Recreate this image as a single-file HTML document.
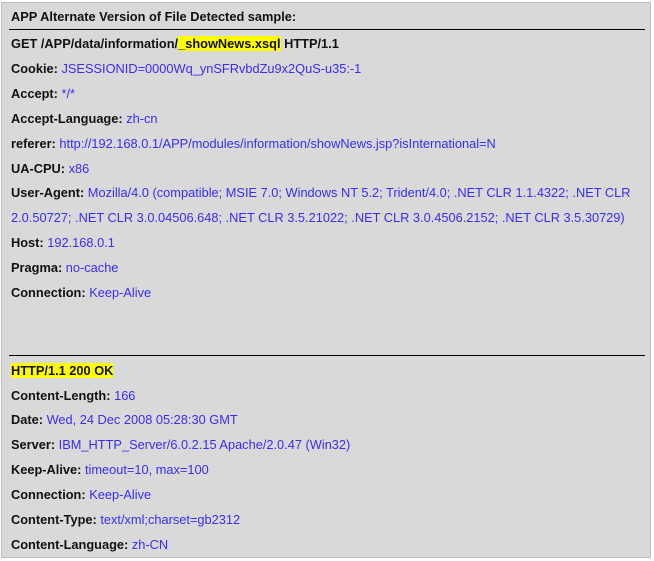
<html><head><style>
body{margin:0;background:#fff;width:654px;height:561px;position:relative;font-family:"Liberation Sans",Arial,sans-serif;font-size:12.8px;}
.box{position:absolute;left:1px;top:2px;width:648px;height:554px;background:#d9d9d9;border:1px solid #bdbdbd;}
.l{position:absolute;left:11px;white-space:nowrap;line-height:17px;}
b{color:#111;}
.v{color:#3a2cf0;}
.hr{position:absolute;left:9px;width:636px;height:1px;background:#000;}
.hl{background:#ffff00;}
</style></head><body>
<div class="box"></div>
<div class="l" style="top:8px"><b>APP Alternate Version of File Detected sample:</b></div>
<div class="hr" style="top:29px"></div>
<div class="l" style="top:35px"><b>GET /APP/data/information/<span class="hl">_showNews.xsql</span> HTTP/1.1</b></div>
<div class="l" style="top:60px"><b>Cookie:</b> <span class="v">JSESSIONID=0000Wq_ynSFRvbdZu9x2QuS-u35:-1</span></div>
<div class="l" style="top:85px"><b>Accept:</b> <span class="v">*/*</span></div>
<div class="l" style="top:110px"><b>Accept-Language:</b> <span class="v">zh-cn</span></div>
<div class="l" style="top:135px"><b>referer:</b> <span class="v">http://192.168.0.1/APP/modules/information/showNews.jsp?isInternational=N</span></div>
<div class="l" style="top:160px"><b>UA-CPU:</b> <span class="v">x86</span></div>
<div class="l" style="top:184px"><b>User-Agent:</b> <span class="v">Mozilla/4.0 (compatible; MSIE 7.0; Windows NT 5.2; Trident/4.0; .NET CLR 1.1.4322; .NET CLR</span></div>
<div class="l" style="top:209px"><span class="v">2.0.50727; .NET CLR 3.0.04506.648; .NET CLR 3.5.21022; .NET CLR 3.0.4506.2152; .NET CLR 3.5.30729)</span></div>
<div class="l" style="top:234px"><b>Host:</b> <span class="v">192.168.0.1</span></div>
<div class="l" style="top:259px"><b>Pragma:</b> <span class="v">no-cache</span></div>
<div class="l" style="top:284px"><b>Connection:</b> <span class="v">Keep-Alive</span></div>
<div class="hr" style="top:355px"></div>
<div class="l" style="top:362px"><b class="hl">HTTP/1.1 200 OK</b></div>
<div class="l" style="top:387px"><b>Content-Length:</b> <span class="v">166</span></div>
<div class="l" style="top:411px"><b>Date:</b> <span class="v">Wed, 24 Dec 2008 05:28:30 GMT</span></div>
<div class="l" style="top:436px"><b>Server:</b> <span class="v">IBM_HTTP_Server/6.0.2.15 Apache/2.0.47 (Win32)</span></div>
<div class="l" style="top:461px"><b>Keep-Alive:</b> <span class="v">timeout=10, max=100</span></div>
<div class="l" style="top:486px"><b>Connection:</b> <span class="v">Keep-Alive</span></div>
<div class="l" style="top:511px"><b>Content-Type:</b> <span class="v">text/xml;charset=gb2312</span></div>
<div class="l" style="top:536px"><b>Content-Language:</b> <span class="v">zh-CN</span></div>
</body></html>
